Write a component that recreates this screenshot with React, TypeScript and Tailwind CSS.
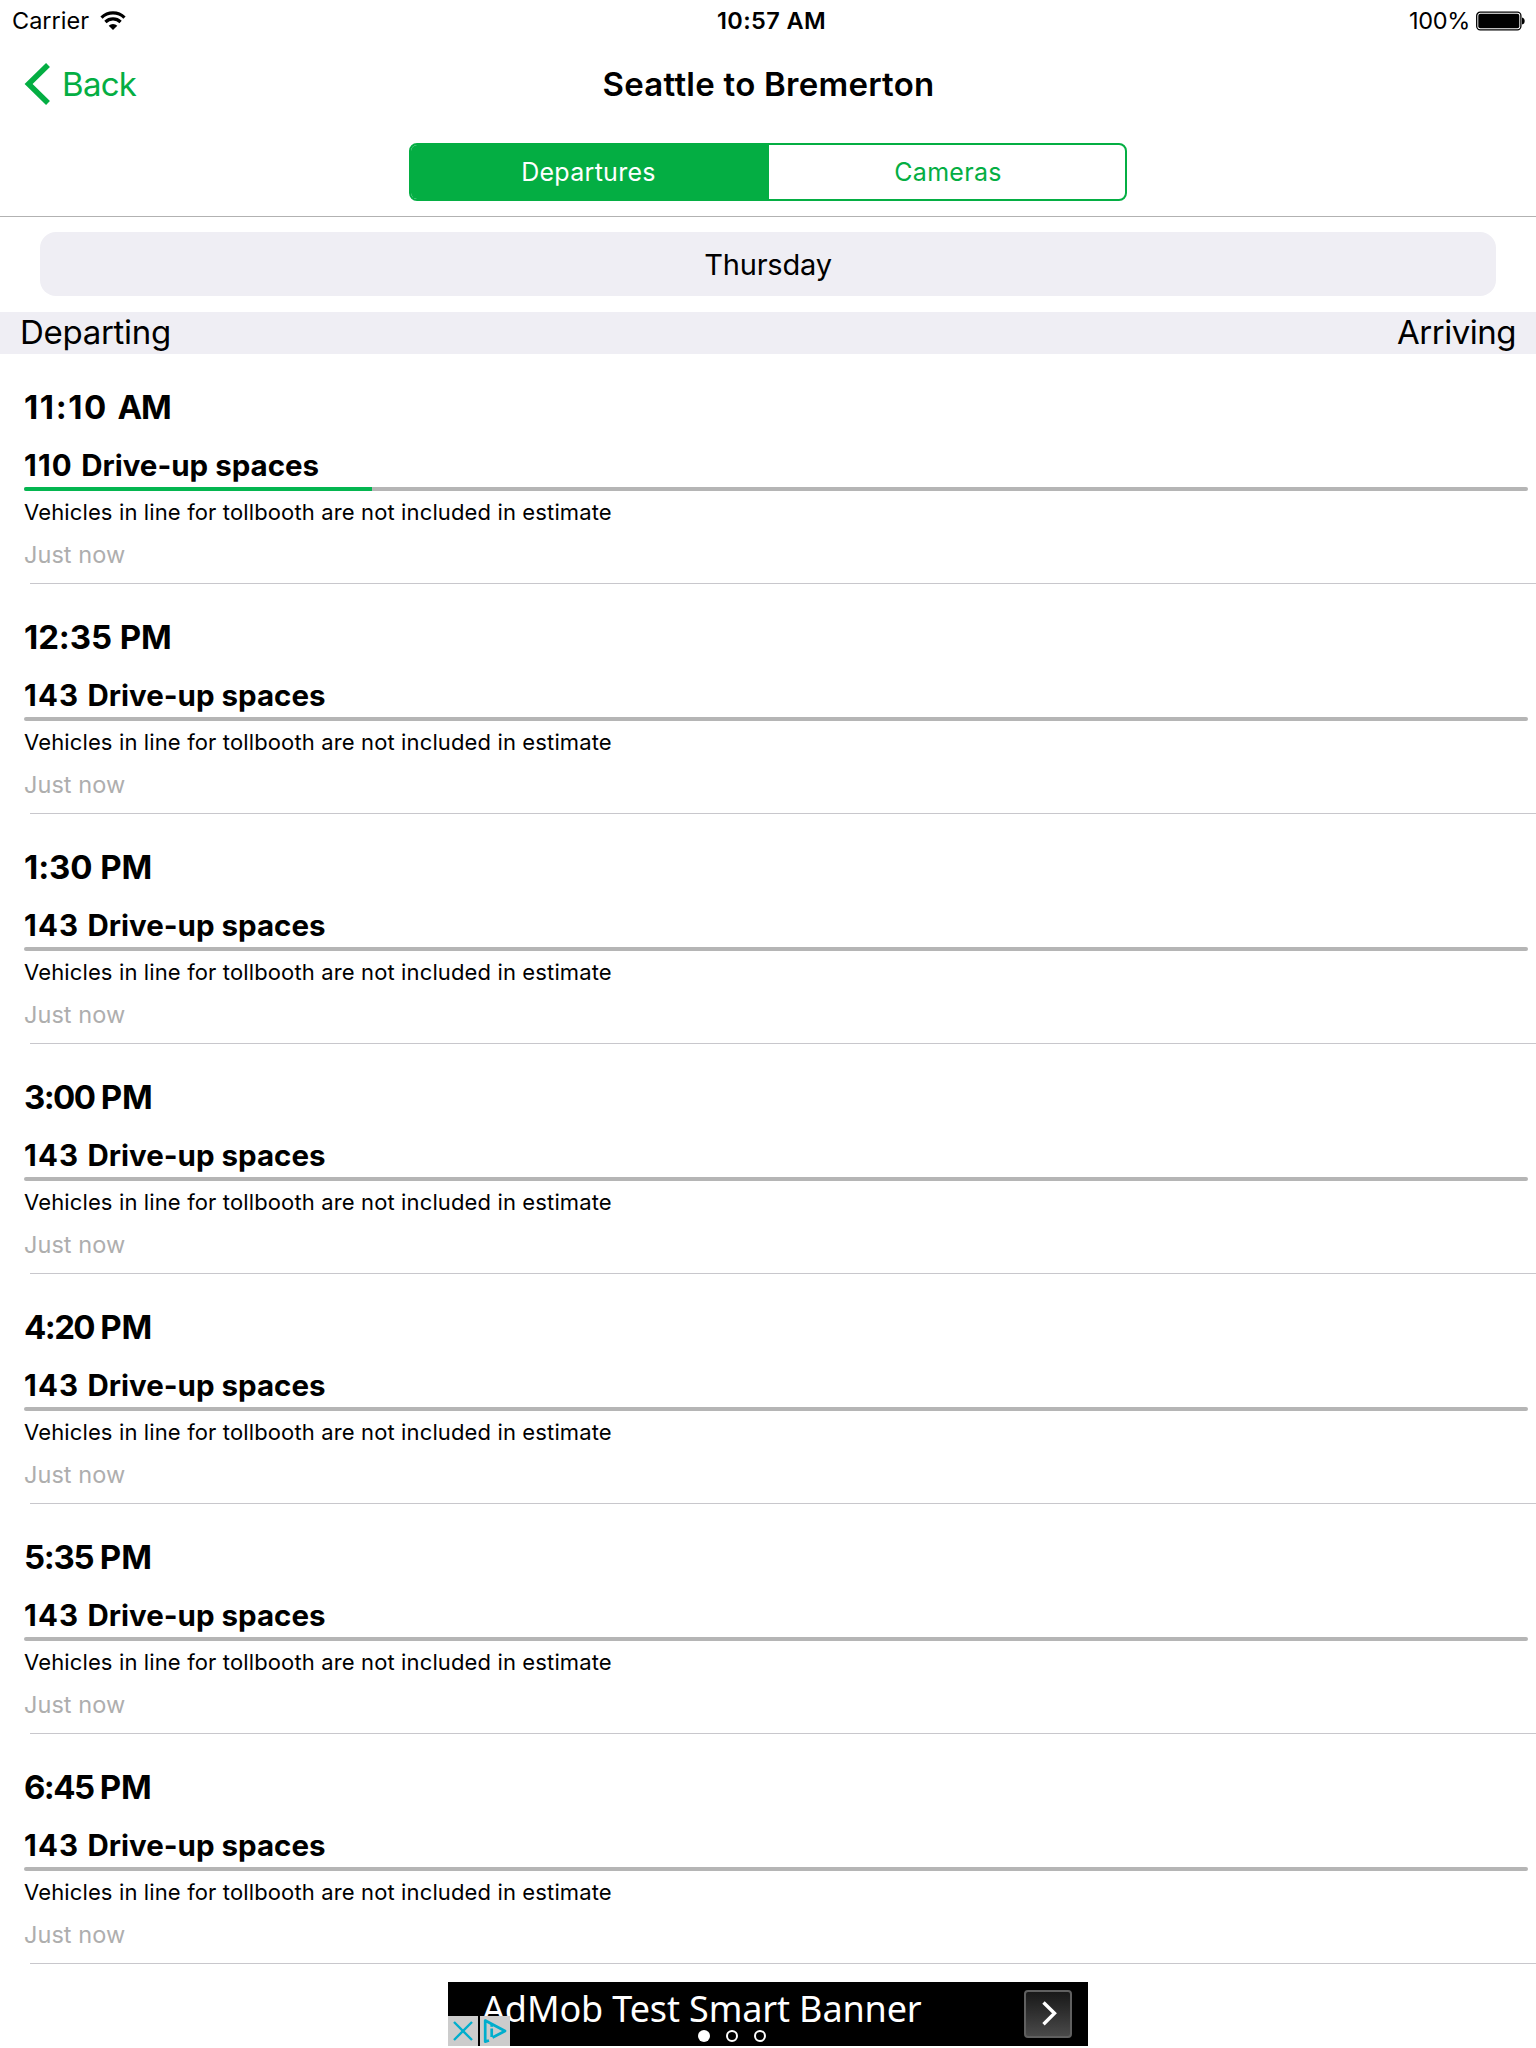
import React from "react";

type Departure = { time: string; period: string; spaces: number; filled: number; tracking: string };

const departures: Departure[] = [
  { time: "11:10", period: "AM", spaces: 110, filled: 23.14, tracking: "tracking-[1.6px]" },
  { time: "12:35", period: "PM", spaces: 143, filled: 0, tracking: "tracking-[-0.1px]" },
  { time: "1:30", period: "PM", spaces: 143, filled: 0, tracking: "tracking-[-0.1px]" },
  { time: "3:00", period: "PM", spaces: 143, filled: 0, tracking: "tracking-[-1.6px]" },
  { time: "4:20", period: "PM", spaces: 143, filled: 0, tracking: "tracking-[-1.6px]" },
  { time: "5:35", period: "PM", spaces: 143, filled: 0, tracking: "tracking-[-1.3px]" },
  { time: "6:45", period: "PM", spaces: 143, filled: 0, tracking: "tracking-[-1.6px]" },
];

function StatusBar() {
  return (
    <div className="grid h-10 grid-cols-3 items-center pl-3 pr-[11px] text-[23.5px] leading-10">
      <div className="flex items-center">
        <span className="mt-px">Carrier</span>
        <svg className="ml-[11px]" width="26" height="20" viewBox="0 0 26 20" fill="none" stroke="#000" strokeWidth="3.2">
          <path d="M1.5 6.6 A16.5 16.5 0 0 1 24.5 6.6" />
          <path d="M5.4 11 A11 11 0 0 1 20.6 11" />
          <path d="M13 19 L8.7 14.7 A6.3 6.3 0 0 1 17.3 14.7 Z" fill="#000" stroke="none" />
        </svg>
      </div>
      <div className="mt-px pl-1.5 text-center font-semibold tracking-[0.4px]">10:57 AM</div>
      <div className="flex items-center justify-end">
        <span className="mt-px tracking-[-0.3px]">100%</span>
        <svg className="ml-1.5" width="49" height="20" viewBox="0 0 49 20">
          <rect x="0.7" y="1.2" width="44.2" height="17.6" rx="3.5" fill="none" stroke="#000" strokeWidth="1.3" />
          <rect x="2.3" y="2.8" width="41" height="14.4" rx="2" />
          <path d="M46 6.5 Q48.7 7 48.7 10 Q48.7 13 46 13.5 Z" />
        </svg>
      </div>
    </div>
  );
}

function NavBar() {
  return (
    <div className="grid h-[88px] grid-cols-3 items-center pl-6 pr-6 text-[33px] leading-[44px]">
      <div className="flex items-center text-[#04ae43]">
        <svg width="27" height="42" viewBox="0 0 27 42" fill="none" stroke="currentColor" strokeWidth="5.6">
          <path d="M24 2 L4.6 21 L24 40" />
        </svg>
        <span className="ml-[11px] tracking-[-0.7px]">Back</span>
      </div>
      <h1 className="pl-px text-center font-semibold tracking-[0.25px]">Seattle to Bremerton</h1>
    </div>
  );
}

function Segments() {
  return (
    <div className="mx-auto mt-[15px] grid h-[58px] w-[718px] grid-cols-[358px_1fr] overflow-hidden rounded-lg border-2 border-[#04ae43] text-center text-[25px] leading-[54px] tracking-[0.3px]">
      <div className="bg-[#04ae43] pr-[3px] text-white">Departures</div>
      <div className="pl-0.5 text-[#04ae43]">Cameras</div>
    </div>
  );
}

function DepartureRow({ time, period, spaces, filled, tracking }: Departure) {
  return (
    <li className="flex h-[230px] flex-col pt-[33px]">
      <div className="ml-6 text-[33px] font-bold leading-10">
        <span className={tracking}>{time} </span>
        <span className={period === "AM" ? "tracking-[-1px]" : "tracking-normal"}>{period}</span>
      </div>
      <div className="ml-6 mt-5 text-[29.5px] font-bold leading-9">
        <span className="tracking-[1.2px]">{spaces} </span>Drive-up spaces
      </div>
      <div className="ml-6 mr-2 mt-1 h-1 shrink-0 overflow-hidden rounded-full bg-[#b5b5b5]">
        <div className="h-1 bg-[#04b650]" style={{ width: `${filled}%` }} />
      </div>
      <div className="ml-6 mt-[7px] text-[22px] leading-7 tracking-[0.13px]">Vehicles in line for tollbooth are not included in estimate</div>
      <div className="ml-6 mt-3.5 text-[23.5px] leading-[30px] tracking-[0.05px] text-[#aeaeae]">Just now</div>
      <div className="ml-[30px] mt-auto h-px shrink-0 bg-[#c8c7cc]" />
    </li>
  );
}

function Banner() {
  return (
    <div className="relative mx-auto mt-[18px] flex h-16 w-[640px] justify-between bg-black pl-[34px] pr-4 pt-2">
      <div className="mt-[-5px] whitespace-nowrap font-['Noto_Sans'] text-[36px] leading-[48px] tracking-[-0.13px] text-white">AdMob Test Smart Banner</div>
      <div className="flex h-12 w-12 items-center justify-center rounded-[4px] border-2 border-[#606060] bg-linear-to-b from-[#191919] to-[#4a4a4a]">
        <svg width="18" height="26" viewBox="0 0 18 26" fill="none" stroke="#fff" strokeWidth="3.4">
          <path d="M4.5 1.5 L15.5 12.3 L4.5 23.2" />
        </svg>
      </div>
      <div className="absolute bottom-0 left-0 flex gap-0.5">
        <div className="flex h-[30px] w-[30px] items-center justify-center bg-[#cccccc]">
          <svg width="20" height="20" viewBox="0 0 20 20" stroke="#00aecd" strokeWidth="2.4">
            <path d="M1 1 L19 19 M19 1 L1 19" />
          </svg>
        </div>
        <div className="flex h-[30px] w-[30px] items-center justify-center bg-[#cccccc]">
          <svg width="24" height="24" viewBox="0 0 24 24" fill="none" stroke="#00aecd" strokeWidth="2.7" strokeLinejoin="round">
            <path d="M6 21.5 L2.2 22.6 V1.5 L22 12 L9.5 18.5" />
            <path d="M8.7 9.5 V18" />
            <path d="M8.7 5.2 V7.8" />
          </svg>
        </div>
      </div>
      <svg className="absolute bottom-[3px] left-[249px]" width="70" height="14" viewBox="0 0 70 14" fill="none" stroke="#fff" strokeWidth="2">
        <circle cx="7" cy="7" r="6" fill="#fff" stroke="none" />
        <circle cx="35" cy="7" r="5" />
        <circle cx="63" cy="7" r="5" />
      </svg>
    </div>
  );
}

export default function App() {
  return (
    <div className="h-[2048px] w-[1536px] overflow-hidden bg-white font-['Inter',sans-serif] text-black">
      <header className="h-[217px] border-b border-[#b2b2b2]">
        <StatusBar />
        <NavBar />
        <Segments />
      </header>
      <div className="mx-10 mt-[15px] h-16 rounded-2xl bg-[#efeef4] text-center text-[29px] leading-[66px] tracking-[-0.2px]">Thursday</div>
      <div className="mt-4 flex h-[42px] justify-between bg-[#efeef4] pl-5 pr-5 text-[33px] leading-10">
        <span className="tracking-[-0.3px]">Departing</span>
        <span className="tracking-[-0.5px]">Arriving</span>
      </div>
      <ul>
        {departures.map((d) => (
          <DepartureRow key={d.time} {...d} />
        ))}
      </ul>
      <Banner />
    </div>
  );
}
